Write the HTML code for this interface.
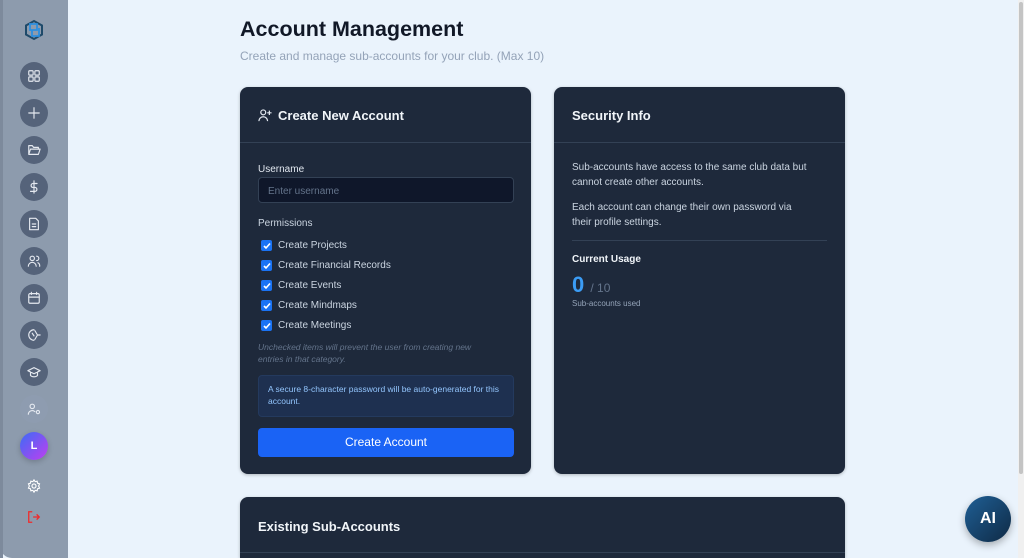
<!DOCTYPE html>
<html style="width:1024px;height:558px;overflow:hidden"><head><meta charset="utf-8"><style>
*{box-sizing:border-box;margin:0;padding:0}
body{width:1024px;height:558px;overflow:hidden;background:#eaf3fc;font-family:"Liberation Sans",sans-serif;position:relative}
.sb{position:absolute;left:0;top:0;width:68px;height:558px;background:#8d9bad;border-bottom-left-radius:12px}
.sb:before{content:"";position:absolute;left:0;top:0;width:3px;height:558px;background:#7d8a9c}
.c{position:absolute;left:20px;width:28px;height:28px;border-radius:50%;background:#55637a;display:flex;align-items:center;justify-content:center}
.c svg{width:14px;height:14px;fill:none;stroke:#e5e9f0;stroke-width:1.3;stroke-linecap:round;stroke-linejoin:round}
.card{position:absolute;background:#1e293b;border-radius:8px;box-shadow:0 1px 3px rgba(0,0,0,.25)}
.t{color:#f1f5f9;font-size:13px;font-weight:bold}
.lbl{color:#e2e8f0;font-size:10px}
.cb{position:absolute;left:21px;display:flex;align-items:center;color:#cbd5e1;font-size:10px}
.cb i{width:11px;height:11px;background:#1a73f5;border-radius:2px;margin-right:6px;display:flex;align-items:center;justify-content:center}
.p{color:#cbd5e1;font-size:10px;line-height:15px}
</style></head><body>
<div class="sb">
 <svg style="position:absolute;left:23px;top:19px" width="22" height="22" viewBox="0 0 22 22"><path d="M11 2 L19 6.5 V15.5 L11 20 L3 15.5 V6.5Z" fill="none" stroke="#1e4a6a" stroke-width="2"/><path d="M7 5 H14 V11 H7Z M9 11 V17 H16 V9" fill="none" stroke="#2b8fe0" stroke-width="1.8"/></svg>
 <div class="c" style="top:62px"><svg viewBox="0 0 16 16"><rect x="2" y="2" width="5" height="5" rx="1"/><rect x="9" y="2" width="5" height="5" rx="1"/><rect x="2" y="9" width="5" height="5" rx="1"/><rect x="9" y="9" width="5" height="5" rx="1"/></svg></div>
 <div class="c" style="top:99px"><svg viewBox="0 0 16 16"><path d="M8 2V14M2 8H14"/></svg></div>
 <div class="c" style="top:136px"><svg viewBox="0 0 16 16"><path d="M2 13V3H6L7.5 5H13V7M2 13L4 7H15L13 13Z"/></svg></div>
 <div class="c" style="top:173px"><svg viewBox="0 0 16 16"><path d="M8 1V15M11.5 4H6.5A2.3 2.3 0 0 0 6.5 8.5H9.5A2.3 2.3 0 0 1 9.5 13H4"/></svg></div>
 <div class="c" style="top:210px"><svg viewBox="0 0 16 16"><path d="M3 1.5H10L13 4.5V14.5H3Z M6 8H10M6 11H10"/></svg></div>
 <div class="c" style="top:247px"><svg viewBox="0 0 16 16"><circle cx="6" cy="5" r="2.5"/><path d="M1.5 14A4.5 4.5 0 0 1 10.5 14M11 2.5A2.5 2.5 0 0 1 11 7.5M12.5 10A4 4 0 0 1 14.5 14"/></svg></div>
 <div class="c" style="top:284px"><svg viewBox="0 0 16 16"><rect x="2" y="3" width="12" height="11" rx="1.5"/><path d="M2 7H14M5 1.5V4M11 1.5V4"/></svg></div>
 <div class="c" style="top:321px"><svg viewBox="0 0 16 16"><path d="M8 2A5 5 0 1 0 8 14M9 3L12 8L9 13M12 8H15M6 6L8 9"/></svg></div>
 <div class="c" style="top:358px"><svg viewBox="0 0 16 16"><path d="M1 6.5L8 3L15 6.5L8 10Z M4 8V12C6 14 10 14 12 12V8"/></svg></div>
 <div class="c" style="top:395px;background:#8e9cb0"><svg viewBox="0 0 16 16"><circle cx="6" cy="5" r="2.5"/><path d="M1.5 14A4.5 4.5 0 0 1 9 11"/><circle cx="12.5" cy="11.5" r="1.8"/></svg></div>
 <div class="c" style="top:432px;background:linear-gradient(135deg,#3b6cf5,#c03ef0);color:#fff;font-size:11px;font-weight:bold;box-shadow:0 2px 6px rgba(0,0,0,.2)">L</div>
 <svg style="position:absolute;left:27px;top:479px" width="14" height="14" viewBox="0 0 16 16" fill="none" stroke="#fff" stroke-width="1.3"><circle cx="8" cy="8" r="2.3"/><path d="M8 1L9.3 3L11.6 2.5L12 4.8L14.3 5.6L13.3 8L14.3 10.4L12 11.2L11.6 13.5L9.3 13L8 15L6.7 13L4.4 13.5L4 11.2L1.7 10.4L2.7 8L1.7 5.6L4 4.8L4.4 2.5L6.7 3Z"/></svg>
 <svg style="position:absolute;left:27px;top:510px" width="14" height="14" viewBox="0 0 16 16" fill="none" stroke="#ef2b2b" stroke-width="1.5"><path d="M6 2H2V14H6M7 8H14M11 5L14 8L11 11"/></svg>
</div>
<div style="position:absolute;left:1018px;top:0;width:6px;height:558px;background:#f0f0f0"><div style="margin:2px 1px;height:472px;background:#c4c4c4;border-radius:3px"></div></div>

<div style="position:absolute;left:240px;top:17px;font-size:21.5px;font-weight:bold;color:#111827">Account Management</div>
<div style="position:absolute;left:240px;top:49px;font-size:12px;color:#94a3b8">Create and manage sub-accounts for your club. (Max 10)</div>

<div class="card" style="left:240px;top:87px;width:291px;height:387px">
 <svg style="position:absolute;left:18px;top:21px" width="14" height="14" viewBox="0 0 16 16" fill="none" stroke="#e2e8f0" stroke-width="1.4"><circle cx="6" cy="5" r="2.8"/><path d="M1 15A5 5 0 0 1 11 15M13 3V8M10.5 5.5H15.5"/></svg>
 <div class="t" style="position:absolute;left:38px;top:21px">Create New Account</div>
 <div style="position:absolute;left:0;right:0;top:55px;border-top:1px solid #334155"></div>
 <div class="lbl" style="position:absolute;left:18px;top:77px">Username</div>
 <div style="position:absolute;left:18px;top:90px;width:256px;height:26px;background:#0f172a;border:1px solid #334155;border-radius:4px;color:#64748b;font-size:10px;padding:8px 9px">Enter username</div>
 <div class="lbl" style="position:absolute;left:18px;top:131px;color:#cbd5e1">Permissions</div>
 <div class="cb" style="top:153px"><i><svg width="8" height="8" viewBox="0 0 8 8" fill="none" stroke="#fff" stroke-width="1.6"><path d="M1 4L3 6L7 1.5"/></svg></i>Create Projects</div>
 <div class="cb" style="top:173px"><i><svg width="8" height="8" viewBox="0 0 8 8" fill="none" stroke="#fff" stroke-width="1.6"><path d="M1 4L3 6L7 1.5"/></svg></i>Create Financial Records</div>
 <div class="cb" style="top:193px"><i><svg width="8" height="8" viewBox="0 0 8 8" fill="none" stroke="#fff" stroke-width="1.6"><path d="M1 4L3 6L7 1.5"/></svg></i>Create Events</div>
 <div class="cb" style="top:213px"><i><svg width="8" height="8" viewBox="0 0 8 8" fill="none" stroke="#fff" stroke-width="1.6"><path d="M1 4L3 6L7 1.5"/></svg></i>Create Mindmaps</div>
 <div class="cb" style="top:233px"><i><svg width="8" height="8" viewBox="0 0 8 8" fill="none" stroke="#fff" stroke-width="1.6"><path d="M1 4L3 6L7 1.5"/></svg></i>Create Meetings</div>
 <div style="position:absolute;left:18px;top:255px;width:240px;font-size:8.5px;line-height:11.5px;font-style:italic;color:#64748b">Unchecked items will prevent the user from creating new entries in that category.</div>
 <div style="position:absolute;left:18px;top:288px;width:256px;height:42px;background:#1e3050;border:1px solid #243a5e;border-radius:4px;padding:8px 9px;font-size:8.5px;line-height:11.5px;color:#93c5fd">A secure 8-character password will be auto-generated for this account.</div>
 <div style="position:absolute;left:18px;top:341px;width:256px;height:29px;background:#1a63f5;border-radius:4px;color:#fff;font-size:12px;text-align:center;line-height:29px">Create Account</div>
</div>

<div class="card" style="left:554px;top:87px;width:291px;height:387px">
 <div class="t" style="position:absolute;left:18px;top:21px">Security Info</div>
 <div style="position:absolute;left:0;right:0;top:55px;border-top:1px solid #334155"></div>
 <div class="p" style="position:absolute;left:18px;top:73px;width:258px">Sub-accounts have access to the same club data but cannot create other accounts.</div>
 <div class="p" style="position:absolute;left:18px;top:113px;width:240px">Each account can change their own password via their profile settings.</div>
 <div style="position:absolute;left:18px;right:18px;top:153px;border-top:1px solid #334155"></div>
 <div style="position:absolute;left:18px;top:167px;font-size:10px;font-weight:bold;color:#f1f5f9">Current Usage</div>
 <div style="position:absolute;left:18px;top:185px;color:#3b9cf5;font-size:22px;font-weight:bold">0 <span style="font-size:12px;font-weight:normal;color:#64748b">/ 10</span></div>
 <div style="position:absolute;left:18px;top:212px;font-size:8px;color:#94a3b8">Sub-accounts used</div>
</div>

<div class="card" style="left:240px;top:497px;width:605px;height:61px;border-bottom-left-radius:0;border-bottom-right-radius:0">
 <div class="t" style="position:absolute;left:18px;top:22px">Existing Sub-Accounts</div>
 <div style="position:absolute;left:0;right:0;top:55px;border-top:1px solid #334155"></div>
</div>

<div style="position:absolute;left:965px;top:496px;width:46px;height:46px;border-radius:50%;background:linear-gradient(135deg,#1f5f95,#0f2a45);box-shadow:0 3px 8px rgba(0,0,0,.3);color:#fff;font-weight:bold;font-size:16px;text-align:center;line-height:46px">AI</div>
</body></html>
